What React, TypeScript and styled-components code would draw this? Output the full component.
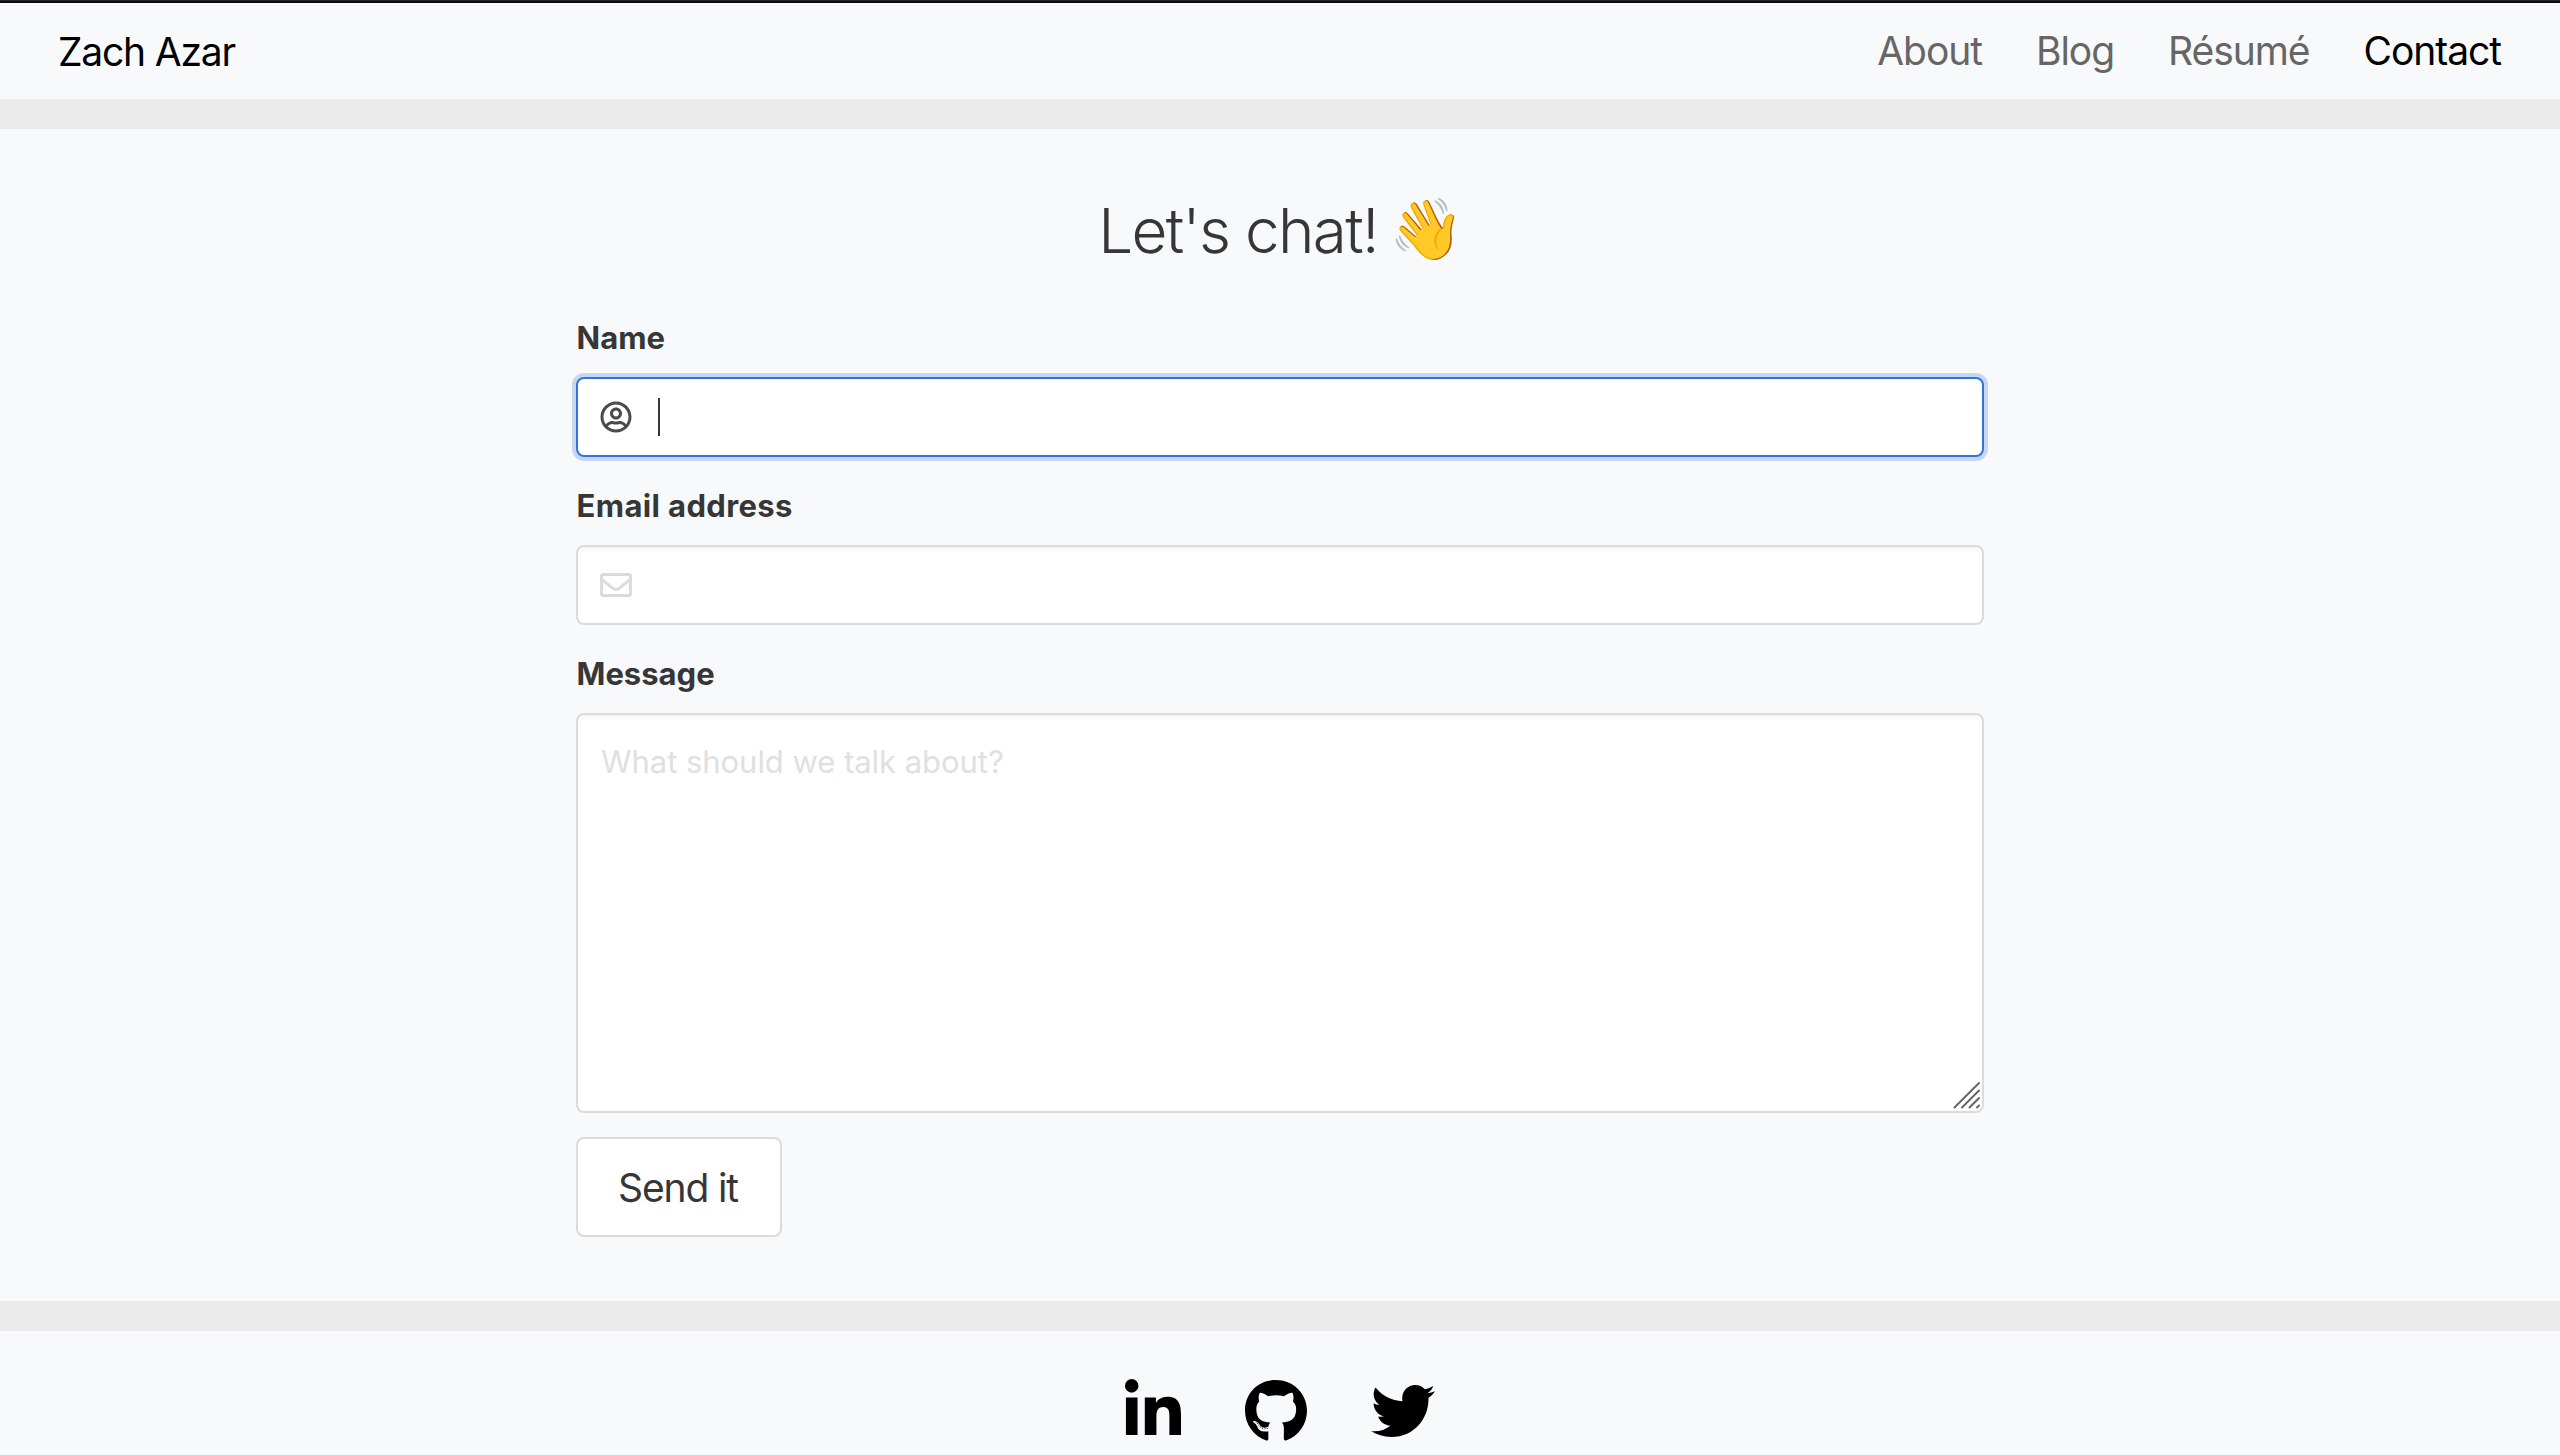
import React from 'react';
import styled, { createGlobalStyle } from 'styled-components';
import { FaGithub, FaLinkedinIn, FaTwitter, FaRegEnvelope, FaRegUserCircle } from 'react-icons/fa';

const GlobalStyle = createGlobalStyle`
  *, *::before, *::after { box-sizing: border-box; }
  body { margin: 0; background: #f8f9fb; color: #363636; font-family: Inter, "Liberation Sans", sans-serif; overflow: hidden; }
`;

const Page = styled.div`
  display: flex;
  flex-direction: column;
  height: 1455px;
  overflow: hidden;
`;

const TopEdge = styled.div`
  flex: none;
  height: 3px;
  background: #0b0b0b;
  border-top: 1px solid #262626;
`;

const Nav = styled.header`
  display: flex;
  justify-content: space-between;
  align-items: center;
  flex: none;
  height: 96px;
  padding: 0 59px 0 58px;
`;

const Brand = styled.a`
  padding-top: 2px;
  font-size: 39px;
  line-height: 60px;
  letter-spacing: -1.2px;
  color: #000;
`;

const Links = styled.nav`
  display: flex;
  gap: 54px;
`;

const NavLink = styled.a<{ $active?: boolean }>`
  font-size: 39px;
  line-height: 60px;
  letter-spacing: -1.05px;
  color: ${(p) => (p.$active ? '#000' : '#666')};
`;

const Divider = styled.hr`
  flex: none;
  height: 30px;
  margin: 0;
  border: 0;
  background: #ebebeb;
`;

const Main = styled.main`
  flex: none;
  height: 1172px;
  padding: 66px 576px 0;
`;

const Title = styled.h1`
  display: flex;
  justify-content: center;
  align-items: center;
  gap: 11px;
  margin: 0;
  padding-left: 2px;
  height: 72px;
  font-size: 62px;
  font-weight: 300;
  line-height: 72px;
  letter-spacing: -1.7px;
`;

const Emoji = styled.span`
  padding-bottom: 6px;
  font-size: 60px;
  line-height: 66px;
  letter-spacing: 0;
`;

const Form = styled.form`
  display: flex;
  flex-direction: column;
  align-items: stretch;
  padding-top: 46px;
`;

const Field = styled.div`
  display: flex;
  flex-direction: column;
  gap: 16px;
  margin-bottom: 24px;
`;

const Label = styled.label<{ $tracking?: number }>`
  height: 48px;
  padding: 1px 0 0 0.5px;
  font-size: 31px;
  font-weight: 700;
  line-height: 48px;
  letter-spacing: ${(p) => p.$tracking ?? 0}px;
`;

const Control = styled.div<{ $focused?: boolean }>`
  display: flex;
  align-items: center;
  height: 80px;
  padding-left: 22px;
  gap: 26px;
  background: #fff;
  border: 2px solid ${(p) => (p.$focused ? '#3273dc' : '#dbdbdb')};
  border-radius: 8px;
  color: ${(p) => (p.$focused ? '#4a4a4a' : '#dbdbdb')};
  box-shadow: ${(p) => (p.$focused ? '0 0 0 4px rgba(50, 115, 220, 0.25)' : 'inset 0 2px 4px rgba(10, 10, 10, 0.05)')};
`;

const Caret = styled.span`
  width: 2px;
  height: 38px;
  background: #363636;
`;

const MessageBox = styled.div`
  display: flex;
  justify-content: space-between;
  height: 400px;
  padding: 23px 1px 2px 23px;
  background: #fff;
  border: 2px solid #dbdbdb;
  border-radius: 8px;
  box-shadow: inset 0 2px 4px rgba(10, 10, 10, 0.05);
`;

const Placeholder = styled.span`
  font-size: 31px;
  line-height: 48px;
  letter-spacing: -0.04px;
  color: #e0e0e0;
`;

const Grip = styled.svg`
  align-self: flex-end;
  width: 28px;
  height: 28px;
`;

const SendButton = styled.button`
  align-self: flex-start;
  width: 206px;
  height: 100px;
  padding: 2px 2px 0 0;
  background: #fff;
  border: 2px solid #dbdbdb;
  border-radius: 8px;
  color: #363636;
  font-family: inherit;
  font-size: 39px;
  line-height: 60px;
  letter-spacing: -1.15px;
`;

const Footer = styled.footer`
  display: flex;
  justify-content: center;
  flex: none;
  gap: 64px;
  padding-top: 48px;
  color: #000;
`;

const LinkedIn = styled(FaLinkedinIn)`
  width: 56px;
  height: 64px;
`;

const GitHub = styled(FaGithub)`
  width: 62px;
  height: 64px;
`;

const Twitter = styled(FaTwitter)`
  width: 64px;
  height: 64px;
`;

export default function App() {
  return (
    <>
      <GlobalStyle />
      <Page>
        <TopEdge />
        <Nav>
          <Brand>Zach Azar</Brand>
          <Links>
            <NavLink>About</NavLink>
            <NavLink>Blog</NavLink>
            <NavLink>Résumé</NavLink>
            <NavLink $active>Contact</NavLink>
          </Links>
        </Nav>
        <Divider />
        <Main>
          <Title><span>Let's chat!</span><Emoji>👋</Emoji></Title>
          <Form>
            <Field>
              <Label>Name</Label>
              <Control $focused><FaRegUserCircle size={32} /><Caret /></Control>
            </Field>
            <Field>
              <Label $tracking={0.38}>Email address</Label>
              <Control><FaRegEnvelope size={32} /></Control>
            </Field>
            <Field>
              <Label>Message</Label>
              <MessageBox>
                <Placeholder>What should we talk about?</Placeholder>
                <Grip viewBox="0 0 28 28" stroke="#666" strokeWidth="2" strokeLinecap="round">
                  <path d="M1.5 26.5L26 2M9 26.5L26 9.5M16.5 26.5L26 17M24 26.5L26 24.5" />
                </Grip>
              </MessageBox>
            </Field>
            <SendButton type="button">Send it</SendButton>
          </Form>
        </Main>
        <Divider />
        <Footer>
          <LinkedIn />
          <GitHub />
          <Twitter />
        </Footer>
      </Page>
    </>
  );
}
